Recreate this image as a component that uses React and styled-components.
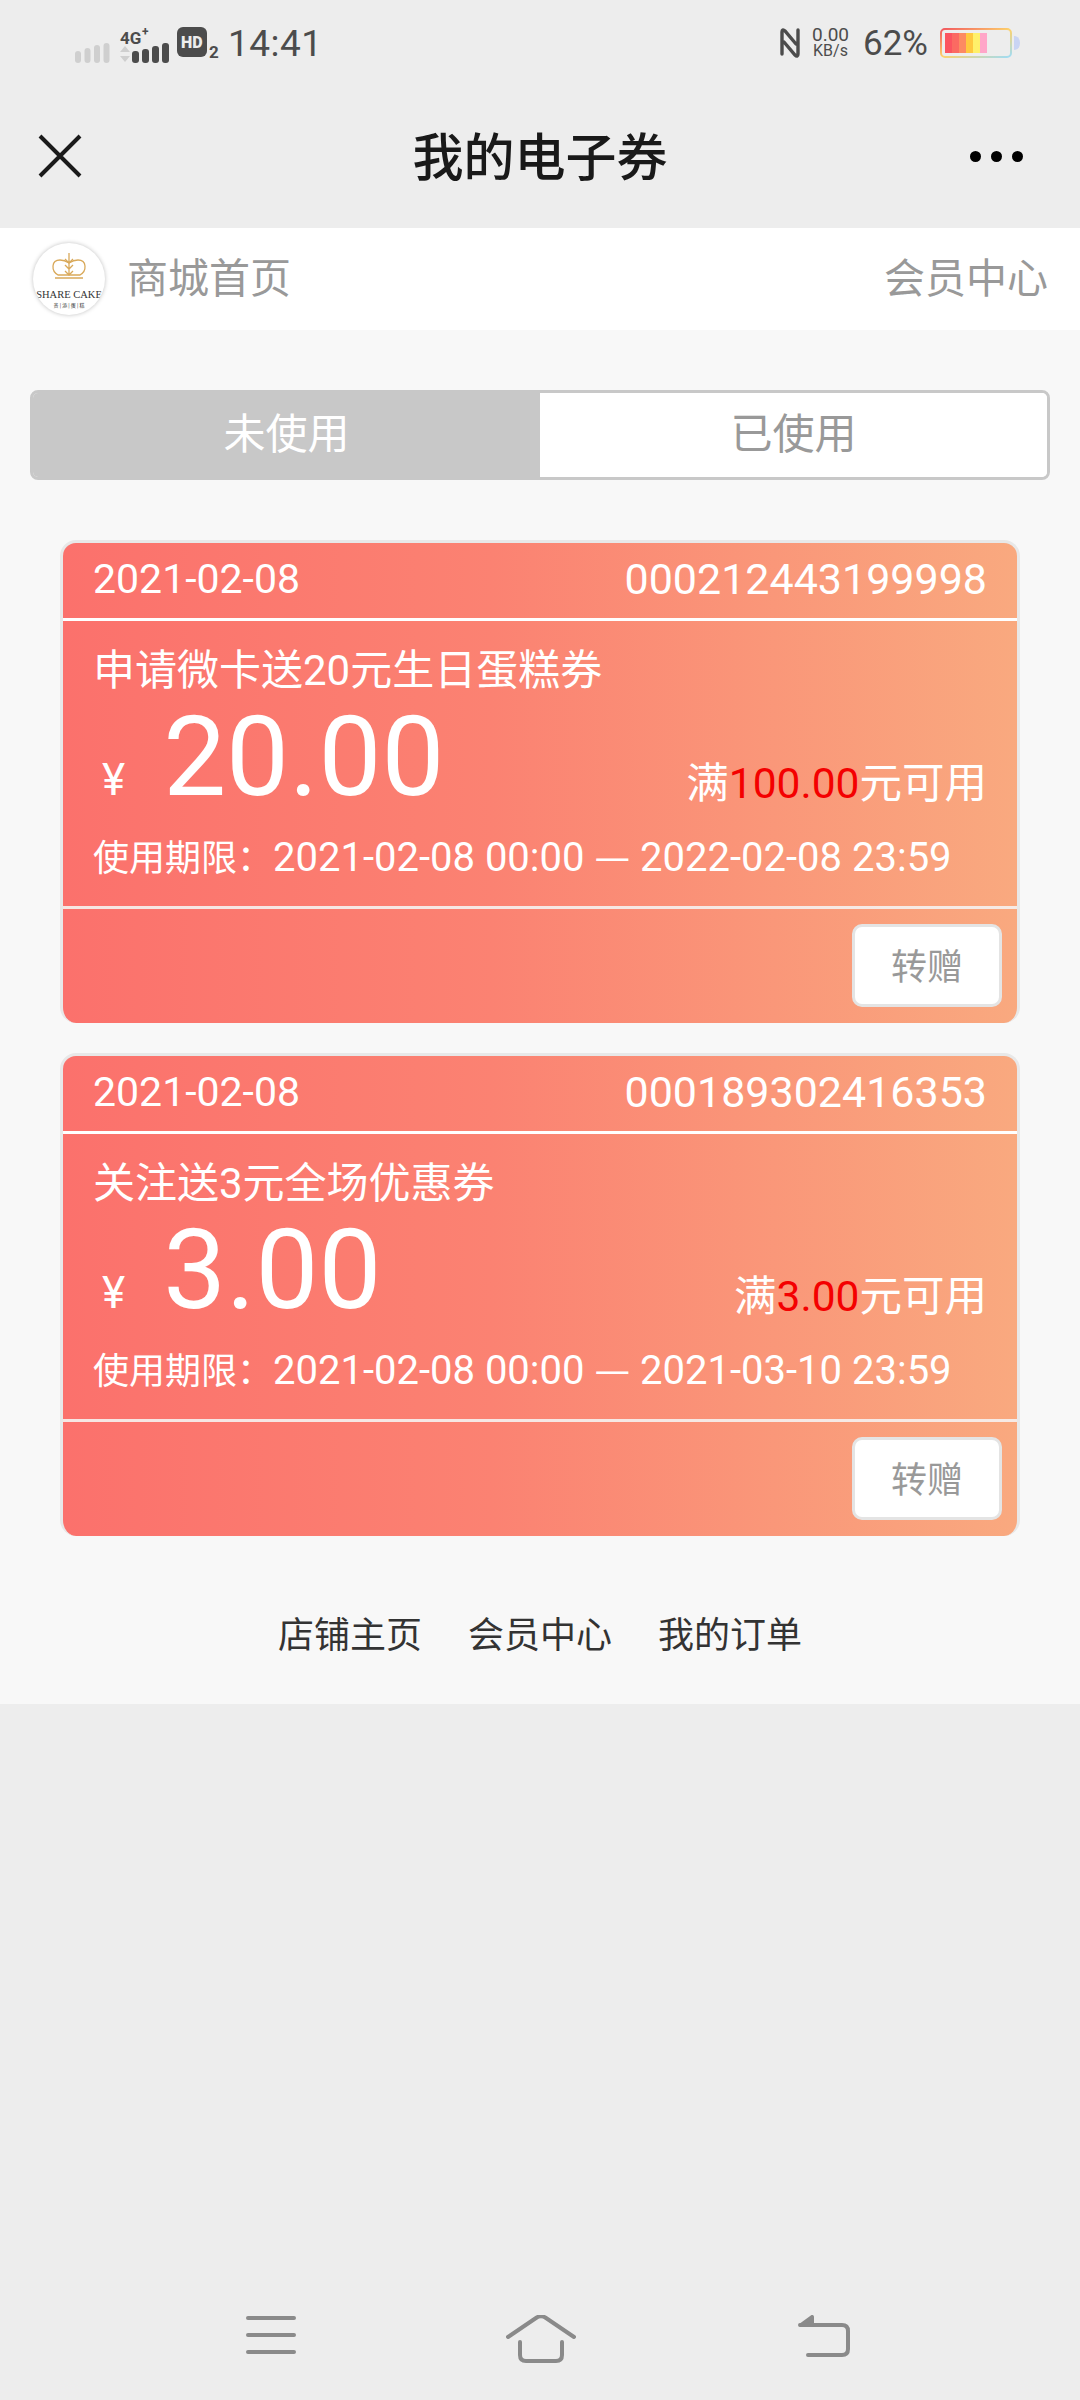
import React from 'react';
import styled, { createGlobalStyle } from 'styled-components';

const GlobalStyle = createGlobalStyle`
  html, body { margin: 0; padding: 0; background: #ededed; }
  * { box-sizing: border-box; }
  body { font-family: Roboto, "Noto Sans CJK SC", sans-serif; }
`;

const Screen = styled.div`
  width: 1080px;
  height: 2400px;
  display: flex;
  flex-direction: column;
  background: #ededed;
  overflow: hidden;
`;

/* status bar */
const StatusBar = styled.div`
  height: 80px;
  padding: 6px 60px 0 75px;
  display: flex;
  align-items: center;
  justify-content: space-between;
  color: #4c4c4c;
`;
const StatusGroup = styled.div`
  display: flex;
  align-items: center;
`;
const Clock = styled.span`
  font-size: 37px;
  margin-left: 7px;
  letter-spacing: 0.5px;
`;
const Speed = styled.div`
  display: flex;
  flex-direction: column;
  align-items: center;
  margin: 0 14px 0 12px;
  line-height: 16px;
  span:first-child { font-size: 19px; }
  span:last-child { font-size: 16px; }
`;
const Percent = styled.span`
  font-size: 35px;
  margin-right: 12px;
`;

/* title bar */
const NavBar = styled.div`
  height: 148px;
  padding: 4px 57px 0 38px;
  display: flex;
  align-items: center;
  justify-content: space-between;
  position: relative;
`;
const NavTitle = styled.h1`
  position: absolute;
  left: 0;
  right: 0;
  top: 41px;
  margin: 0;
  text-align: center;
  font-size: 51px;
  line-height: 66px;
  font-weight: 500;
  color: #191919;
  font-family: "Noto Sans CJK SC", sans-serif;
`;
const Dots = styled.div`
  display: flex;
  gap: 10px;
  i {
    width: 11px;
    height: 11px;
    border-radius: 50%;
    background: #000;
  }
`;

/* shop link bar */
const ShopBar = styled.div`
  height: 102px;
  padding: 0 32px 9px 33px;
  display: flex;
  align-items: center;
  justify-content: space-between;
  background: #fff;
  font-family: "Noto Sans CJK SC", sans-serif;
  font-size: 41px;
  color: #999;
`;
const ShopHome = styled.div`
  display: flex;
  align-items: center;
  gap: 22px;
`;
const Logo = styled.svg`
  width: 72px;
  height: 72px;
  margin-top: 9px;
  border-radius: 50%;
  background: #fff;
  box-shadow: 0 0 4px rgba(0, 0, 0, 0.25);
`;

/* page */
const Page = styled.div`
  height: 1374px;
  padding: 60px 30px 0;
  background: #f8f8f8;
  display: flex;
  flex-direction: column;
`;
const Tabs = styled.div`
  display: flex;
  height: 90px;
  border: 3px solid #c8c8c8;
  border-radius: 8px;
  overflow: hidden;
`;
const Tab = styled.div`
  flex: 1;
  display: flex;
  align-items: center;
  justify-content: center;
  padding-bottom: 9px;
  font-family: "Noto Sans CJK SC", sans-serif;
  font-size: 42px;
  color: ${p => (p.$active ? '#fff' : '#999')};
  background: ${p => (p.$active ? '#c8c8c8' : '#fff')};
`;
const CouponList = styled.div`
  margin: 60px 30px 0;
  display: flex;
  flex-direction: column;
  gap: 30px;
`;
const Coupon = styled.div`
  height: 483px;
  border: 3px solid #e8e8e8;
  border-bottom: 0;
  border-radius: 16px;
  background: linear-gradient(90deg, #fb716c 0%, #fb8272 45%, #f9a97f 100%);
  color: #fff;
  display: flex;
  flex-direction: column;
`;
const CouponHead = styled.div`
  height: 78px;
  padding: 0 30px 4px;
  display: flex;
  align-items: center;
  justify-content: space-between;
  border-bottom: 3px solid #fff;
  font-size: 41px;
`;
const Serial = styled.span`
  font-size: 43px;
`;
const CouponBody = styled.div`
  height: 288px;
  padding: 24px 30px 0;
  border-bottom: 3px solid rgba(245, 240, 238, 0.92);
  display: flex;
  flex-direction: column;
`;
const CouponName = styled.div`
  font-size: 42px;
  line-height: 52px;
  white-space: nowrap;
`;
const AmountRow = styled.div`
  height: 114px;
  display: flex;
  align-items: flex-end;
  justify-content: space-between;
`;
const Amount = styled.div`
  display: flex;
  align-items: baseline;
  gap: 38px;
  margin-bottom: -3px;
  line-height: 114px;
  font-size: 112px;
  small {
    font-size: 44px;
    line-height: 1;
    margin-left: 9px;
  }
`;
const Threshold = styled.div`
  font-size: 42.5px;
  line-height: 50px;
  margin-bottom: 2px;
  em { font-style: normal; color: #f40000; }
`;
const Validity = styled.div`
  margin-top: 18px;
  font-size: 40px;
  line-height: 50px;
  white-space: nowrap;
`;
const ValidityLabel = styled.span`
  font-size: 36px;
  font-family: "Noto Sans CJK SC", sans-serif;
`;
const Dash = styled.span`
  font-family: "Noto Sans CJK SC", sans-serif;
`;
const CouponFoot = styled.div`
  flex: 1;
  padding: 15px 15px 0 0;
  display: flex;
  justify-content: flex-end;
  align-items: flex-start;
`;
const GiftButton = styled.div`
  width: 150px;
  height: 83px;
  padding-bottom: 3px;
  background: #fff;
  border: 3px solid #e4e4e4;
  border-radius: 10px;
  display: flex;
  align-items: center;
  justify-content: center;
  font-family: "Noto Sans CJK SC", sans-serif;
  font-size: 36px;
  color: #999;
`;
const FooterLinks = styled.div`
  margin-top: 71px;
  display: flex;
  justify-content: center;
  gap: 46px;
  font-family: "Noto Sans CJK SC", sans-serif;
  font-size: 36px;
  line-height: 50px;
  color: #333;
`;

/* system nav */
const SystemNav = styled.div`
  margin-top: auto;
  height: 85px;
  padding: 0 0 0 246px;
  display: flex;
  align-items: flex-start;
`;
const NavIcon = styled.svg`
  display: block;
  margin-right: ${p => p.$gap || 0}px;
  fill: none;
  stroke: #8a8a8a;
  stroke-width: 4;
  stroke-linecap: round;
  stroke-linejoin: round;
`;

const Coupons = [
  {
    date: '2021-02-08',
    serial: '000212443199998',
    name: '申请微卡送20元生日蛋糕券',
    amount: '20.00',
    min: '100.00',
    until: '2022-02-08 23:59',
  },
  {
    date: '2021-02-08',
    serial: '000189302416353',
    name: '关注送3元全场优惠券',
    amount: '3.00',
    min: '3.00',
    until: '2021-03-10 23:59',
  },
];

function StatusLeft() {
  return (
    <StatusGroup>
      <svg width="102" height="46" viewBox="0 0 102 46">
        {[12, 15, 18, 20].map((h, i) => (
          <rect key={i} x={i * 9.5} y={46 - 3 - h} width="6" height={h} rx="3" fill="#cfcfcf" />
        ))}
        <text x="45" y="24" fontSize="17" fontWeight="700" fontFamily="Roboto" fill="#4c4c4c">4G</text>
        <text x="67" y="16" fontSize="12" fontWeight="700" fontFamily="Roboto" fill="#4c4c4c">+</text>
        <path d="M45 32l5-6 5 6zM45 36l5 6 5-6z" fill="#cfcfcf" />
        {[12, 14, 17, 20].map((h, i) => (
          <rect key={i} x={57 + i * 10} y={46 - 3 - h} width="7" height={h} rx="3" fill="#4c4c4c" />
        ))}
      </svg>
      <svg width="44" height="40" viewBox="0 0 44 40">
        <rect x="0" y="4" width="30" height="30" rx="6" fill="#4c4c4c" />
        <text x="4" y="25" fontSize="16" fontWeight="900" fontFamily="Roboto" fill="#ededed">HD</text>
        <text x="32" y="35" fontSize="17" fontWeight="700" fontFamily="Roboto" fill="#4c4c4c">2</text>
      </svg>
      <Clock>14:41</Clock>
    </StatusGroup>
  );
}

function BatteryIcon() {
  const stripes = ['#fb5460', '#fb6a62', '#fd8a62', '#ffc83f', '#fff06a', '#ffa6c8'];
  return (
    <svg width="80" height="32" viewBox="0 0 80 32">
      <defs>
        <linearGradient id="batt" x1="0" y1="0" x2="1" y2="1">
          <stop offset="0" stopColor="#f2585f" />
          <stop offset="0.5" stopColor="#fdd26c" />
          <stop offset="1" stopColor="#9fdcf5" />
        </linearGradient>
      </defs>
      <rect x="1" y="2" width="70" height="28" rx="4" fill="none" stroke="url(#batt)" strokeWidth="2" />
      {stripes.map((c, i) => (
        <rect key={c} x={5 + i * 7} y="6" width="7" height="20" fill={c} />
      ))}
      <path d="M74 9c4 0 6 3 6 7s-2 7-6 7z" fill="#c9d4f4" />
    </svg>
  );
}

function StatusRight() {
  return (
    <StatusGroup>
      <svg width="20" height="32" viewBox="0 0 20 32">
        <path d="M2 27V5c0-2 1-3 3-1l11 13M18 3v24c0 2-1 3-3 1L4 15" fill="none" stroke="#4c4c4c" strokeWidth="3.4" strokeLinecap="round" />
      </svg>
      <Speed>
        <span>0.00</span>
        <span>KB/s</span>
      </Speed>
      <Percent>62%</Percent>
      <BatteryIcon />
    </StatusGroup>
  );
}

function ShopLogo() {
  return (
    <Logo viewBox="0 0 72 72">
      <g fill="none" stroke="#d9a95a" strokeWidth="1.3">
        <path d="M25 32c-7-4-7-15 2-15 4 0 6 1 9 3 3-2 5-3 9-3 9 0 9 11 2 15z" />
        <path d="M36 10v22M32 16l4 4 4-4M32 22l4 4 4-4M32 28l4 4 4-4" />
        <path d="M22 35h28" strokeWidth="1.6" />
      </g>
      <text x="36" y="55" textAnchor="middle" fontSize="10.5" fontFamily="Liberation Serif" fill="#333">SHARE CAKE</text>
      <text x="36" y="64" textAnchor="middle" fontSize="5" fontFamily="Noto Sans CJK SC" fill="#333">贵 | 添 | 蛋 | 糕</text>
    </Logo>
  );
}

function CouponCard({ coupon }) {
  return (
    <Coupon>
      <CouponHead>
        <span>{coupon.date}</span>
        <Serial>{coupon.serial}</Serial>
      </CouponHead>
      <CouponBody>
        <CouponName>{coupon.name}</CouponName>
        <AmountRow>
          <Amount>
            <small>¥</small>
            {coupon.amount}
          </Amount>
          <Threshold>
            满<em>{coupon.min}</em>元可用
          </Threshold>
        </AmountRow>
        <Validity>
          <ValidityLabel>使用期限：</ValidityLabel>
          {coupon.date} 00:00 <Dash>—</Dash> {coupon.until}
        </Validity>
      </CouponBody>
      <CouponFoot>
        <GiftButton>转赠</GiftButton>
      </CouponFoot>
    </Coupon>
  );
}

export default function App() {
  return (
    <Screen>
      <GlobalStyle />
      <StatusBar>
        <StatusLeft />
        <StatusRight />
      </StatusBar>
      <NavBar>
        <svg width="44" height="44" viewBox="0 0 44 44">
          <path d="M2 2l40 40M42 2L2 42" stroke="#1a1a1a" strokeWidth="4" />
        </svg>
        <NavTitle>我的电子券</NavTitle>
        <Dots>
          <i />
          <i />
          <i />
        </Dots>
      </NavBar>
      <ShopBar>
        <ShopHome>
          <ShopLogo />
          <span>商城首页</span>
        </ShopHome>
        <span>会员中心</span>
      </ShopBar>
      <Page>
        <Tabs>
          <Tab $active>未使用</Tab>
          <Tab>已使用</Tab>
        </Tabs>
        <CouponList>
          {Coupons.map(c => (
            <CouponCard key={c.serial} coupon={c} />
          ))}
        </CouponList>
        <FooterLinks>
          <span>店铺主页</span>
          <span>会员中心</span>
          <span>我的订单</span>
        </FooterLinks>
      </Page>
      <SystemNav>
        <NavIcon width="50" height="40" viewBox="0 0 50 40" $gap={210}>
          <path d="M2 3h46M2 20h46M2 37h46" />
        </NavIcon>
        <NavIcon width="70" height="48" viewBox="0 0 70 48" $gap={222}>
          <path d="M2 22L30 3c3-2 7-2 10 0l28 19M14 27v13c0 4 2 6 6 6h30c4 0 6-2 6-6V27" />
        </NavIcon>
        <NavIcon width="52" height="44" viewBox="0 0 52 44">
          <path d="M2 10h42c4 0 6 2 6 6v18c0 4-2 6-6 6H10" />
          <path d="M3 10l11-8v8z" fill="#8a8a8a" />
        </NavIcon>
      </SystemNav>
    </Screen>
  );
}
